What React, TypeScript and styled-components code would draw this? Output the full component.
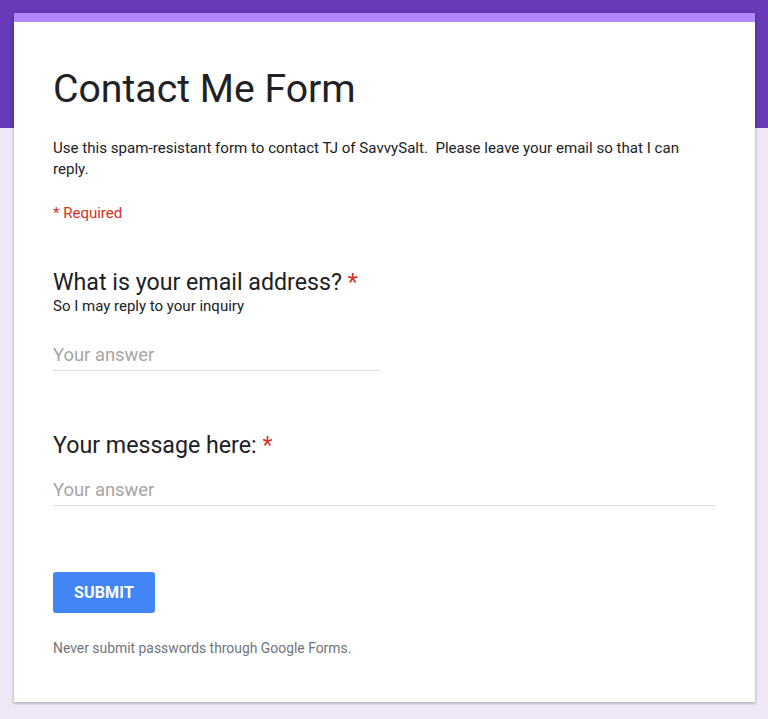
import React from "react";
import styled, { createGlobalStyle } from "styled-components";

const Global = createGlobalStyle`
  html, body { margin: 0; padding: 0; }
  body {
    background: #ede7f6;
    font-family: Roboto, "Noto Sans", Arial, sans-serif;
    color: #202124;
  }
`;

const Page = styled.div`
  min-height: 719px;
  background: linear-gradient(#673ab7 0, #673ab7 128px, #ede7f6 128px);
  padding: 13px 13px 17px 14px;
  box-sizing: border-box;
`;

const Card = styled.div`
  background: #fff;
  border-top: 9px solid #b388ff;
  box-shadow: 0 1px 3px rgba(0, 0, 0, 0.35);
  padding: 0 39px;
  height: 689px;
  box-sizing: border-box;
  display: flex;
  flex-direction: column;
`;

const Title = styled.h1`
  margin: 43px 0 0;
  font-size: 39.2px;
  font-weight: 400;
  line-height: 48px;
  color: #202124;
`;

const Description = styled.p`
  margin: 25px 0 0;
  font-size: 15.1px;
  line-height: 21px;
  color: #202124;
`;

const Required = styled.div`
  margin-top: 23px;
  font-size: 15px;
  line-height: 20px;
  color: #d93025;
`;

const Question = styled.div<{ $top: number }>`
  margin-top: ${(p) => p.$top}px;
  display: flex;
  flex-direction: column;
`;

const QTitle = styled.div`
  font-size: 23.2px;
  line-height: 28px;
  color: #202124;
`;

const Star = styled.span`
  color: #d93025;
`;

const Help = styled.div`
  font-size: 15px;
  line-height: 20px;
  color: #202124;
`;

const Input = styled.div<{ $width: string; $top: number }>`
  margin-top: ${(p) => p.$top}px;
  width: ${(p) => p.$width};
  border-bottom: 1px solid #e0e0e0;
  padding-bottom: 4px;
  font-size: 18.4px;
  line-height: 22px;
  color: #a6a6a6;
`;

const SubmitButton = styled.button`
  margin-top: 66px;
  align-self: flex-start;
  width: 102px;
  height: 41px;
  border: none;
  border-radius: 3px;
  background: #4285f4;
  color: #fff;
  font-family: Roboto, Arial, sans-serif;
  font-weight: 700;
  font-size: 16px;
  letter-spacing: 0.2px;
`;

const Footer = styled.div`
  margin-top: 26px;
  font-size: 13.9px;
  line-height: 18px;
  color: #70757a;
`;

export default function App() {
  return (
    <>
      <Global />
      <Page>
        <Card>
          <Title>Contact Me Form</Title>
          <Description>
            Use this spam-resistant form to contact TJ of SavvySalt.&nbsp; Please leave your email so that I can reply.
          </Description>
          <Required>* Required</Required>
          <Question $top={45}>
            <QTitle>
              What is your email address? <Star>*</Star>
            </QTitle>
            <Help>So I may reply to your inquiry</Help>
            <Input $width="327px" $top={28}>Your answer</Input>
          </Question>
          <Question $top={60}>
            <QTitle>
              Your message here: <Star>*</Star>
            </QTitle>
            <Input $width="100%" $top={20}>Your answer</Input>
          </Question>
          <SubmitButton>SUBMIT</SubmitButton>
          <Footer>Never submit passwords through Google Forms.</Footer>
        </Card>
      </Page>
    </>
  );
}
